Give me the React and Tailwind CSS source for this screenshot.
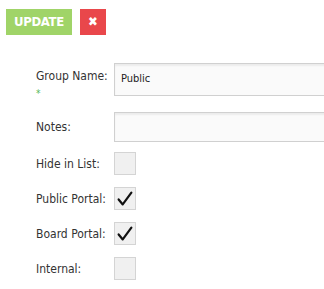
import React from "react";

const font = { fontFamily: "Tahoma, 'DejaVu Sans Condensed', 'Noto Sans', sans-serif" };

const Check = () => (
  <svg viewBox="0 0 22 22" className="w-[20px] h-[20px]">
    <path d="M4 11.5 L8.5 17 L18 4" fill="none" stroke="#111" strokeWidth="2.4" strokeLinecap="round" strokeLinejoin="round" />
  </svg>
);

const CheckRow = ({ label, checked }) => (
  <div className="flex items-center h-[23px]">
    <label className="w-[78px] text-[12px] text-[#333]">{label}</label>
    <div className="w-[22px] h-[23px] border border-[#d4d4d4] bg-[#f0f0f0] flex items-center justify-center">
      {checked && <Check />}
    </div>
  </div>
);

export default function App() {
  return (
    <div className="w-[324px] h-[289px] bg-white overflow-hidden font-[Tahoma,sans-serif]" style={font}>
      <div className="flex gap-[8px] pl-[6px] pt-[9px]">
        <button className="h-[26px] px-[8px] bg-[#a0d468] text-white font-bold text-[13px] tracking-tight">
          UPDATE
        </button>
        <button className="h-[26px] w-[26px] bg-[#e9474b] text-white font-bold text-[13px] flex items-center justify-center">
          ✖
        </button>
      </div>

      <div className="pl-[36px] pt-[28px] flex flex-col">
        <div className="flex items-start">
          <div className="w-[78px] pt-[6px] text-[12px] text-[#333] leading-[14px]">
            Group Name:
            <div className="text-[#58b858] text-[10px] leading-[10px] mt-[6px]">*</div>
          </div>
          <div className="flex-1 h-[33px] border border-[#d0d0d0] bg-[#fafafa] shadow-[inset_0_2px_2px_rgba(0,0,0,0.06)] -mr-[40px] flex items-center pl-[6px] text-[11px] text-[#222]">
            Public
          </div>
        </div>

        <div className="flex items-center mt-[13px]">
          <label className="w-[78px] text-[12px] text-[#333]">Notes:</label>
          <div className="flex-1 h-[30px] border border-[#d0d0d0] bg-[#fafafa] shadow-[inset_0_2px_2px_rgba(0,0,0,0.06)] -mr-[40px]" />
        </div>

        <div className="flex flex-col gap-[12px] mt-[10px]">
          <CheckRow label="Hide in List:" />
          <CheckRow label="Public Portal:" checked />
          <CheckRow label="Board Portal:" checked />
          <CheckRow label="Internal:" />
        </div>
      </div>
    </div>
  );
}
